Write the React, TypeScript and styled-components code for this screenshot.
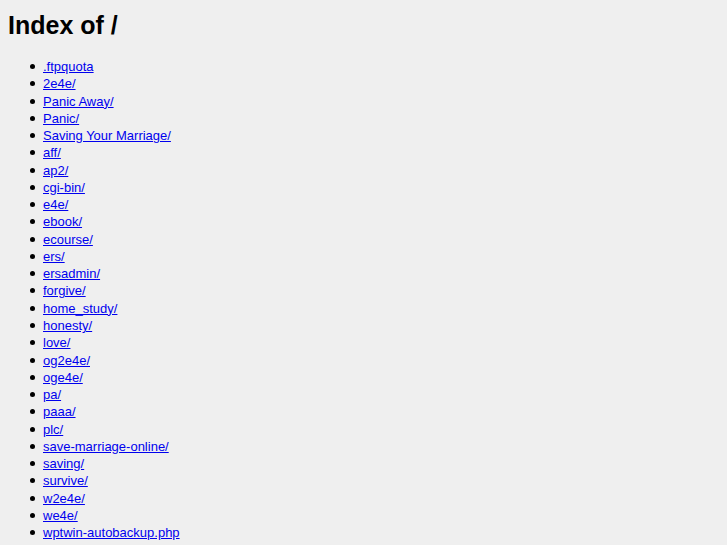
import React from "react";
import styled, { createGlobalStyle } from "styled-components";

const Global = createGlobalStyle`
  html, body { background: #efefef; }
  body { margin: 8px; font-family: "Liberation Sans", Arial, sans-serif; font-size: 13px; color: #000; }
`;

const Title = styled.h1`
  font-size: 25px;
  font-weight: bold;
  margin: 0;
  padding-top: 2px;
  line-height: 30px;
`;

const List = styled.ul`
  margin: 18px 0 0 0;
  padding-left: 35px;
  list-style: none;
`;

const Item = styled.li`
  line-height: 17.26px;
  &::before {
    content: "";
    display: inline-block;
    width: 5px;
    height: 5px;
    border-radius: 50%;
    background: #000;
    margin-left: -13px;
    margin-right: 8px;
    vertical-align: 2px;
  }
`;

const Link = styled.a`
  color: #0000ee;
  text-decoration: underline;
`;

const entries = [
  ".ftpquota", "2e4e/", "Panic Away/", "Panic/", "Saving Your Marriage/", "aff/", "ap2/",
  "cgi-bin/", "e4e/", "ebook/", "ecourse/", "ers/", "ersadmin/", "forgive/", "home_study/",
  "honesty/", "love/", "og2e4e/", "oge4e/", "pa/", "paaa/", "plc/", "save-marriage-online/",
  "saving/", "survive/", "w2e4e/", "we4e/", "wptwin-autobackup.php",
];

export default function App() {
  return (
    <>
      <Global />
      <Title>Index of /</Title>
      <List>
        {entries.map((e) => (
          <Item key={e}>
            <Link href="#">{e}</Link>
          </Item>
        ))}
      </List>
    </>
  );
}
